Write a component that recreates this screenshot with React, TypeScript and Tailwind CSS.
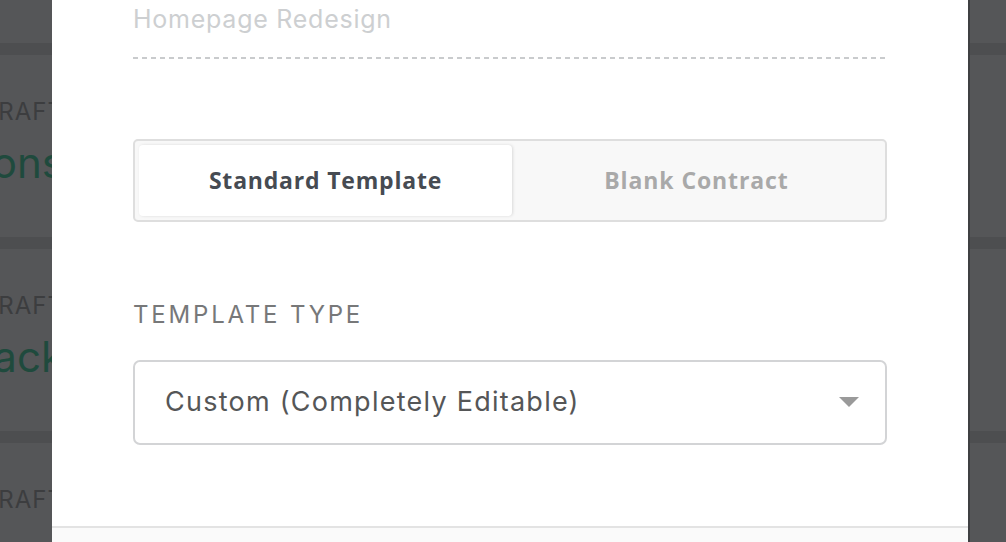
export default function App() {
  const rows = [
    { label: 'DRAFT', title: 'Fashions' },
    { label: 'DRAFT', title: 'Snack' },
    { label: 'DRAFT', title: 'Brand' },
  ]

  return (
    <div
      className="flex h-[542px] w-[1006px] overflow-hidden bg-[#555658]"
      style={{ fontFamily: 'Inter, "Open Sans", sans-serif' }}
    >
      {/* page behind the overlay, left side */}
      <div className="flex w-[52px] shrink-0 flex-col overflow-hidden">
        <div className="h-[43px] shrink-0" />
        {rows.map((row, i) => (
          <div key={i} className="flex shrink-0 flex-col items-end">
            <div className="h-[12px] w-full bg-[#4d4e50]" />
            <div className="-mr-[12px] mt-[42px] whitespace-nowrap text-[24px] leading-[30px] tracking-[1px] text-[#3c3d3f]">{row.label}</div>
            <div className="-mr-[12px] mt-[10px] whitespace-nowrap text-[42px] leading-[52px] text-[#1f4a3d]">{row.title}</div>
            <div className="h-[48px]" />
          </div>
        ))}
      </div>

      {/* modal */}
      <div className="flex w-[916px] shrink-0 flex-col bg-white">
        <div className="flex flex-1 flex-col px-[81px]">
          <div className="pt-[4px] text-[25px] leading-[30px] tracking-[0.75px] text-[#cdcfd1]">Homepage Redesign</div>
          <div className="mt-[23px] h-[1.5px] bg-[repeating-linear-gradient(90deg,#c9cbcd_0_5px,transparent_5px_9px)]" />

          <div className="mt-[80px] flex h-[83px] rounded-[5px] border-2 border-[#dedede] bg-[#f8f8f8] p-[4px] font-['Open_Sans',sans-serif]">
            <div className="flex w-[373px] items-center justify-center rounded-[4px] bg-white text-[23px] font-bold tracking-[0.8px] text-[#464b52] shadow-[1px_0_3px_rgba(0,0,0,0.12)]">
              Standard Template
            </div>
            <div className="flex flex-1 items-center justify-center text-[23px] font-bold tracking-[0.9px] text-[#a9a9a9]">
              Blank Contract
            </div>
          </div>

          <div className="mt-[79px] text-[24px] leading-[28px] tracking-[2.8px] text-[#777879]">TEMPLATE TYPE</div>

          <div className="mt-[31px] flex h-[85px] items-center justify-between rounded-[7px] border-2 border-[#d3d4d6] pl-[30px] pr-[26px]">
            <span className="text-[27px] tracking-[1.25px] text-[#555657]">Custom (Completely Editable)</span>
            <svg width="20" height="11" viewBox="0 0 20 11">
              <path d="M0 0 L20 0 L10 10 Z" fill="#9a9a9a" />
            </svg>
          </div>
        </div>
        <div className="h-[16px] border-t-2 border-[#e3e3e3] bg-[#fafafa]" />
      </div>

      {/* page behind the overlay, right side */}
      <div className="flex flex-1 flex-col border-l-2 border-[#3f4042]">
        <div className="h-[43px] shrink-0" />
        <div className="h-[12px] shrink-0 bg-[#4d4e50]" />
        <div className="h-[182px] shrink-0" />
        <div className="h-[12px] shrink-0 bg-[#4d4e50]" />
        <div className="h-[182px] shrink-0" />
        <div className="h-[12px] shrink-0 bg-[#4d4e50]" />
      </div>
    </div>
  )
}
